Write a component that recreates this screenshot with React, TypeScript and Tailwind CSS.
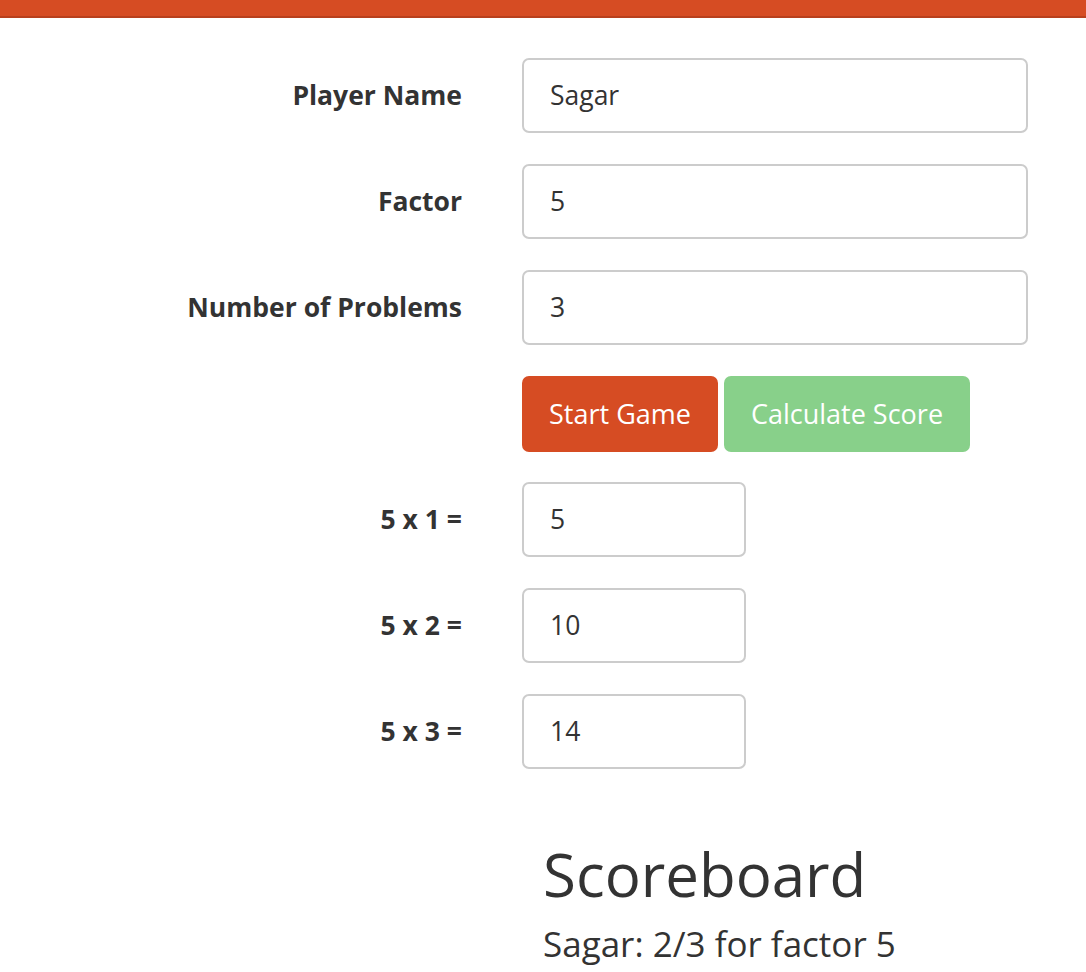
import React from "react";

const font = { fontFamily: '"Open Sans", "Noto Sans", sans-serif' };

function Row({ label, value, small }: { label: string; value: string; small?: boolean }) {
  return (
    <div className="flex items-center mb-[31px]">
      <label className="w-[462px] text-right font-bold text-[26.5px] text-[#333333] shrink-0">{label}</label>
      <div className="ml-[60px]">
        <div
          className={`h-[75px] border-2 border-[#cccccc] rounded-[7px] flex items-center pl-[26px] text-[26.5px] text-[#333333] ${small ? "w-[224px]" : "w-[506px]"}`}
        >
          {value}
        </div>
      </div>
    </div>
  );
}

export default function App() {
  return (
    <div className="min-h-[972px] bg-white" style={font}>
      <div className="h-[16px] bg-[#d64c23]" />
      <div className="h-[2px] bg-[#b8401d]" />
      <div className="pt-[40px]">
        <Row label="Player Name" value="Sagar" />
        <Row label="Factor" value="5" />
        <Row label="Number of Problems" value="3" />
        <div className="flex mb-[30px]">
          <div className="w-[462px] shrink-0" />
          <div className="ml-[60px] flex gap-[6px]">
            <div className="h-[76px] w-[196px] rounded-[7px] bg-[#d64c23] text-white text-[27px] flex items-center justify-center">
              Start Game
            </div>
            <div className="h-[76px] w-[246px] rounded-[7px] bg-[#88d08a] text-white text-[27px] flex items-center justify-center">
              Calculate Score
            </div>
          </div>
        </div>
        <Row label="5 x 1 =" value="5" small />
        <Row label="5 x 2 =" value="10" small />
        <Row label="5 x 3 =" value="14" small />
        <div className="pl-[543px] pt-[38px] text-[#333333]">
          <h1 className="text-[60px] leading-[72px] m-0">Scoreboard</h1>
          <p className="text-[35px] leading-[48px] mt-[10px]">Sagar: 2/3 for factor 5</p>
        </div>
      </div>
    </div>
  );
}
